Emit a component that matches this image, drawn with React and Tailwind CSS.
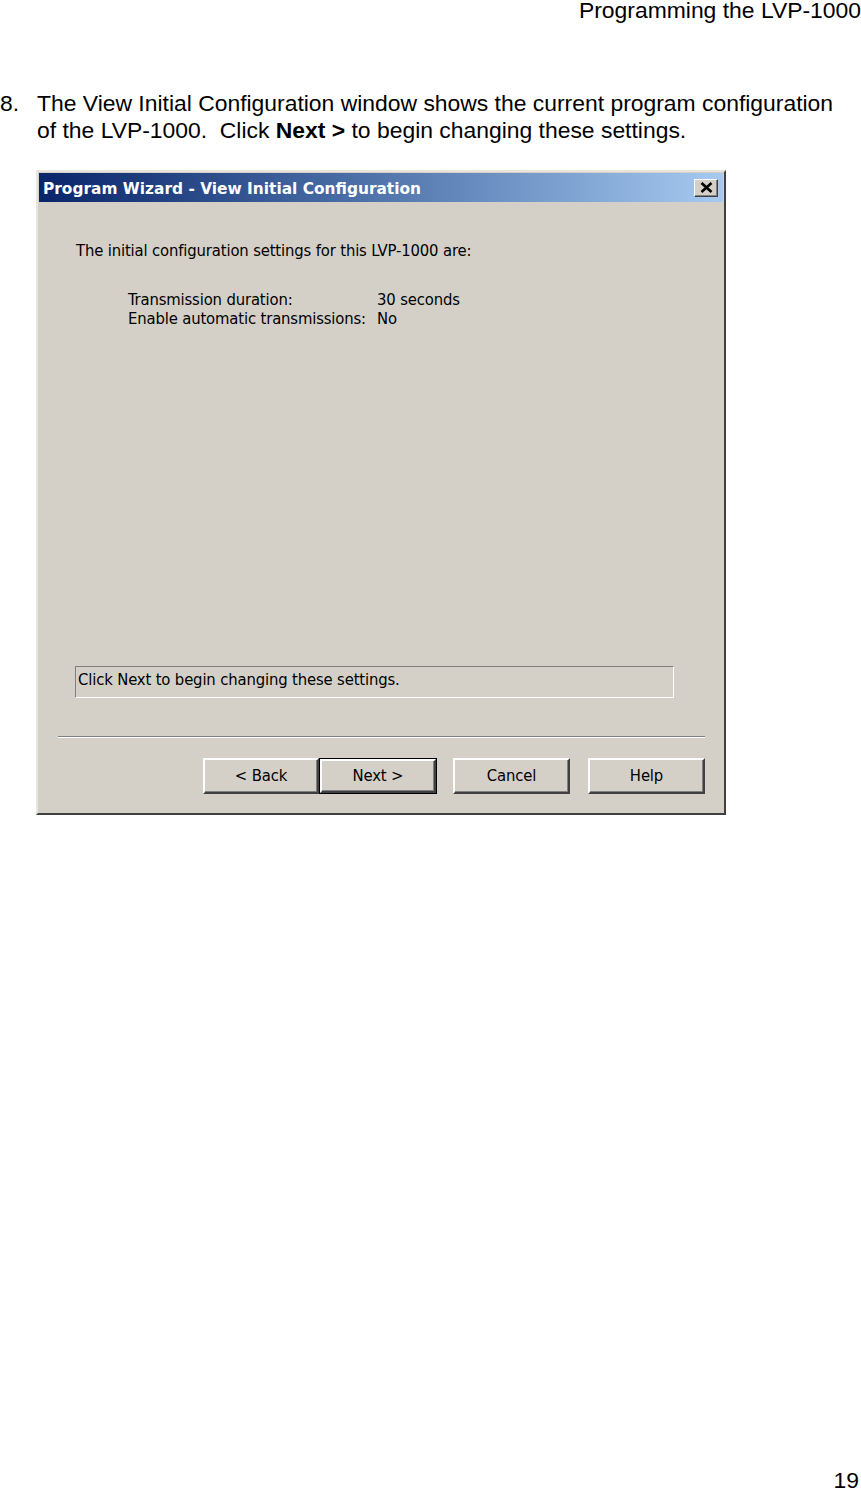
import React from "react";

const narrow = "font-['DejaVu_Sans_Condensed','Liberation_Sans',sans-serif] tracking-[-0.15px]";

// classic raised 3D push button
const WinButton = ({ children, width, isDefault }) => (
  <div className={`${width} h-[36px] ${isDefault ? "border border-black" : ""}`}>
    <button
      type="button"
      className={`w-full h-full bg-[#d4d0c8] border-t-2 border-l-2 border-t-white border-l-white border-r-2 border-b-2 border-r-[#404040] border-b-[#404040] shadow-[inset_-1px_-1px_0_#808080] text-[16.5px] leading-none text-black ${narrow}`}
    >
      {children}
    </button>
  </div>
);

const CloseBox = () => (
  <div className="w-[24px] h-[18px] bg-[#d4d0c8] border-t border-l border-t-white border-l-white border-r border-b border-r-[#404040] border-b-[#404040] shadow-[inset_-1px_-1px_0_#808080] flex items-center justify-center">
    <svg width="13" height="11" viewBox="0 0 13 11">
      <path d="M1.5 1 L11.5 10 M11.5 1 L1.5 10" stroke="#000" strokeWidth="2.6" fill="none" />
    </svg>
  </div>
);

const WizardWindow = () => (
  <div className="ml-[36px] w-[690px] h-[645px] border-2 border-t-[#e8e5de] border-l-[#e8e5de] border-r-[#404040] border-b-[#404040] bg-[#d4d0c8] p-[1px] flex flex-col">
    {/* title bar */}
    <div className="h-[29px] flex items-center justify-between pl-[4px] pr-[5px] bg-gradient-to-r from-[#0a246a] to-[#a6caf0]">
      <span className="pt-[4px] text-white font-bold text-[15.4px] leading-none font-['DejaVu_Sans',sans-serif]">
        Program Wizard - View Initial Configuration
      </span>
      <CloseBox />
    </div>

    {/* body */}
    <div className={`flex-1 flex flex-col ${narrow} text-[16.5px] text-black`}>
      <p className="pl-[37px] pt-[39px] leading-[20px]">The initial configuration settings for this LVP-1000 are:</p>
      <div className="pl-[89px] mt-[29px] grid grid-cols-[249px_auto] leading-[19px] whitespace-nowrap">
        <span>Transmission duration:</span>
        <span>30 seconds</span>
        <span>Enable automatic transmissions:</span>
        <span>No</span>
      </div>

      <div className="mt-auto ml-[36px] w-[599px] h-[32px] border border-t-[#808080] border-l-[#808080] border-r-white border-b-white pl-[2px] pt-[3px] leading-[20px]">
        Click Next to begin changing these settings.
      </div>

      <div className="mt-[38px] ml-[19px] mr-[18px] h-[2px] border-t border-t-[#808080] border-b border-b-white" />

      <div className="mt-[20px] mb-[18px] pr-[18px] flex justify-end">
        <WinButton width="w-[116px]">&lt; Back</WinButton>
        <WinButton width="w-[118px]" isDefault>Next &gt;</WinButton>
        <div className="ml-[16px]">
          <WinButton width="w-[117px]">Cancel</WinButton>
        </div>
        <div className="ml-[18px]">
          <WinButton width="w-[117px]">Help</WinButton>
        </div>
      </div>
    </div>
  </div>
);

export default function App() {
  return (
    <div className="h-[1490px] overflow-hidden bg-white text-black flex flex-col font-['Liberation_Sans',Arial,sans-serif] text-[22.9px]">
      <div className="text-right leading-[20px]">Programming the LVP-1000</div>

      <div className="mt-[70px] flex leading-[27px]">
        <span className="w-[37px] shrink-0">8.</span>
        <p className="whitespace-nowrap">
          The View Initial Configuration window shows the current program configuration
          <br />
          of the LVP-1000.&nbsp; Click <b>Next &gt;</b> to begin changing these settings.
        </p>
      </div>

      <div className="mt-[26px]">
        <WizardWindow />
      </div>

      <div className="mt-auto pr-[2px] text-right leading-[20px]">19</div>
    </div>
  );
}
